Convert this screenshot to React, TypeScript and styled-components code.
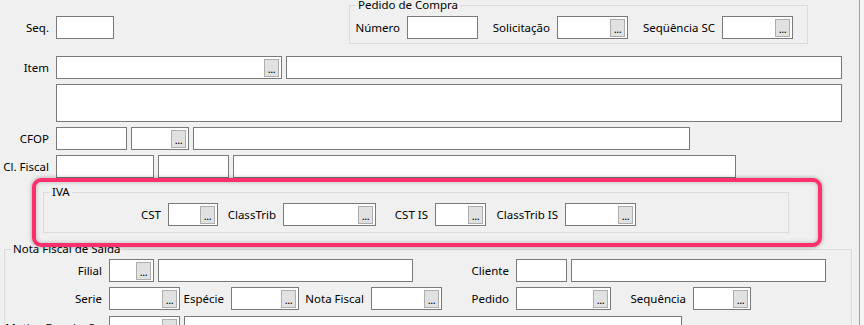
import styled, { createGlobalStyle } from "styled-components";

const GlobalStyle = createGlobalStyle`
  body {
    margin: 0;
    background: #f0f0f0;
    font-family: "Segoe UI", "Noto Sans", "Liberation Sans", sans-serif;
    font-size: 11.5px;
    color: #000;
  }
`;

const Screen = styled.div`
  display: flex;
  width: 864px;
  height: 325px;
  overflow: hidden;
`;

const Form = styled.div`
  width: 859px;
  flex-shrink: 0;
  display: flex;
  flex-direction: column;
`;

const Divider = styled.div`
  width: 1px;
  background: #a0a0a0;
`;

const Gutter = styled.div`
  flex: 1;
  background: #f5f5f5;
`;

const TopRow = styled.div`
  display: flex;
  align-items: flex-start;
  height: 44px;
  flex-shrink: 0;
`;

const Row = styled.div<{ $top?: number; $left?: number }>`
  display: flex;
  align-items: center;
  height: 23px;
  flex-shrink: 0;
  margin-top: ${({ $top }) => $top ?? 0}px;
  margin-left: ${({ $left }) => $left ?? 0}px;
`;

const Label = styled.span<{ $w: number }>`
  width: ${({ $w }) => $w}px;
  flex-shrink: 0;
  box-sizing: border-box;
  padding-right: 7px;
  text-align: right;
  white-space: nowrap;
  line-height: 23px;
`;

const Field = styled.div<{ $w: number; $h?: number; $ml?: number }>`
  width: ${({ $w }) => $w}px;
  height: ${({ $h }) => $h ?? 23}px;
  margin-left: ${({ $ml }) => $ml ?? 0}px;
  flex-shrink: 0;
  box-sizing: border-box;
  border: 1px solid #7a7a7a;
  background: #fff;
  display: flex;
  align-items: center;
  justify-content: flex-end;
  padding-right: 2px;
`;

const DotsButton = styled.div`
  width: 15px;
  height: 18px;
  margin-top: 1px;
  box-sizing: border-box;
  border: 1px solid #adadad;
  background: #e1e1e1;
  display: flex;
  align-items: flex-end;
  justify-content: center;
  font-size: 11px;
  line-height: 11px;
  padding-bottom: 2px;
  letter-spacing: -0.5px;
`;

const Group = styled.fieldset<{ $w: number; $ml?: number; $mt?: number; $pt: number; $pb: number }>`
  width: ${({ $w }) => $w}px;
  margin: ${({ $mt }) => $mt ?? 0}px 0 0 ${({ $ml }) => $ml ?? 0}px;
  padding: ${({ $pt }) => $pt}px 0 ${({ $pb }) => $pb}px 0;
  box-sizing: border-box;
  border: 1px solid #dcdcdc;
  min-width: 0;
  flex-shrink: 0;
`;

const Legend = styled.legend`
  margin-left: 6px;
  padding: 0 2px;
  font-size: 11.5px;
  line-height: 10px;
  white-space: nowrap;
`;

const Highlight = styled.div`
  position: relative;
  z-index: 2;
  width: 790px;
  height: 69px;
  margin-left: 32px;
  box-sizing: border-box;
  border: 4px solid #fd2f6d;
  border-radius: 9px;
  padding: 5px 0 0 7px;
  box-shadow: 0 0 4px rgba(0, 0, 0, 0.35), inset 0 0 4px rgba(0, 0, 0, 0.25);
  flex-shrink: 0;
`;

const Lookup = ({ w, ml }: { w: number; ml?: number }) => (
  <Field $w={w} $ml={ml}>
    <DotsButton>...</DotsButton>
  </Field>
);

export default function App() {
  return (
    <>
      <GlobalStyle />
      <Screen>
        <Form>
          <TopRow>
            <Row $top={16}>
              <Label $w={56}>Seq.</Label>
              <Field $w={58} />
            </Row>
            <Group $w={459} $ml={235} $pt={6} $pb={4}>
              <Legend>Pedido de Compra</Legend>
              <Row>
                <Label $w={57}>Número</Label>
                <Field $w={71} />
                <Label $w={79}>Solicitação</Label>
                <Lookup w={71} />
                <Label $w={94}>Seqüência SC</Label>
                <Lookup w={71} />
              </Row>
            </Group>
          </TopRow>

          <Row $top={12}>
            <Label $w={56}>Item</Label>
            <Lookup w={226} />
            <Field $w={556} $ml={4} />
          </Row>
          <Row $top={5} $left={56} style={{ height: 38 }}>
            <Field $w={786} $h={38} />
          </Row>
          <Row $top={5}>
            <Label $w={56}>CFOP</Label>
            <Field $w={71} />
            <Lookup w={58} ml={4} />
            <Field $w={497} $ml={4} />
          </Row>
          <Row $top={5}>
            <Label $w={56}>Cl. Fiscal</Label>
            <Field $w={98} />
            <Field $w={71} $ml={4} />
            <Field $w={503} $ml={4} />
          </Row>

          <Highlight>
            <Group $w={746} $pt={6} $pb={6}>
              <Legend>IVA</Legend>
              <Row>
                <Label $w={124}>CST</Label>
                <Lookup w={50} />
                <Label $w={65}>ClassTrib</Label>
                <Lookup w={93} />
                <Label $w={59}>CST IS</Label>
                <Lookup w={51} />
                <Label $w={79}>ClassTrib IS</Label>
                <Lookup w={71} />
              </Row>
            </Group>
          </Highlight>

          <Group $w={848} $ml={4} $mt={-3} $pt={5} $pb={4}>
            <Legend>Nota Fiscal de Saída</Legend>
            <Row>
              <Label $w={104}>Filial</Label>
              <Lookup w={45} />
              <Field $w={255} $ml={4} />
              <Label $w={103}>Cliente</Label>
              <Field $w={51} />
              <Field $w={255} $ml={4} />
            </Row>
            <Row $top={5}>
              <Label $w={104}>Serie</Label>
              <Lookup w={71} />
              <Label $w={51}>Espécie</Label>
              <Lookup w={68} />
              <Label $w={72}>Nota Fiscal</Label>
              <Lookup w={71} />
              <Label $w={74}>Pedido</Label>
              <Lookup w={95} />
              <Label $w={82}>Sequência</Label>
              <Lookup w={58} />
            </Row>
            <Row $top={6}>
              <Label $w={104}>Motivo Devolução</Label>
              <Lookup w={71} />
              <Field $w={498} $ml={4} />
            </Row>
          </Group>
        </Form>
        <Divider />
        <Gutter />
      </Screen>
    </>
  );
}
